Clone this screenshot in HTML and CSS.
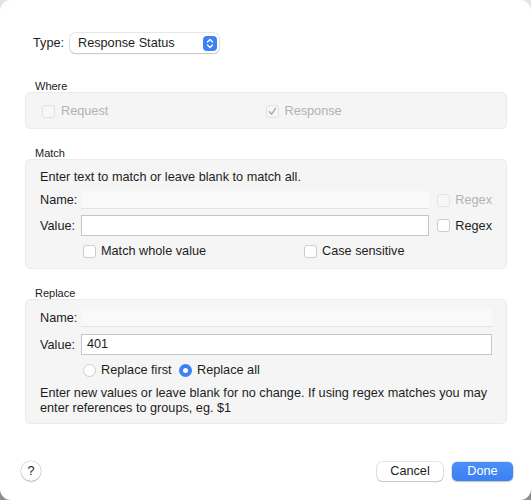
FILE: index.html
```html
<!DOCTYPE html>
<html>
<head>
    <title>Edit Rule</title>
    <link rel="stylesheet" href="styles.css">
</head>
<body>
    <div class="window">
        <div class="type-row">
            <span class="type-label">Type:</span>
            <div class="popup">
                <span>Response Status</span>
                <span class="stepper">
                    <svg width="14" height="15" viewBox="0 0 14 15">
                        <rect width="14" height="15" rx="4" fill="#3a82f6"/>
                        <path d="M4.5 6 L7 3.5 L9.5 6 M4.5 9 L7 11.5 L9.5 9" fill="none" stroke="#fff" stroke-width="1.4" stroke-linecap="round" stroke-linejoin="round"/>
                    </svg>
                </span>
            </div>
        </div>

        <div class="section-title where-title">Where</div>
        <div class="group where">
            <label class="check disabled"><span class="box"></span>Request</label>
            <label class="check disabled">
                <span class="box">
                    <svg width="11" height="11" viewBox="0 0 11 11"><path d="M2.5 5.8 L4.6 8.2 L8.6 2.4" fill="none" stroke="#a8a8a8" stroke-width="1.4" stroke-linecap="round" stroke-linejoin="round"/></svg>
                </span>Response
            </label>
        </div>

        <div class="section-title">Match</div>
        <div class="group match">
            <p class="note">Enter text to match or leave blank to match all.</p>
            <div class="field-row">
                <span class="field-label">Name:</span>
                <div class="field off"></div>
                <label class="check disabled regex"><span class="box"></span>Regex</label>
            </div>
            <div class="field-row">
                <span class="field-label">Value:</span>
                <div class="field input"></div>
                <label class="check regex"><span class="box"></span>Regex</label>
            </div>
            <div class="option-row">
                <label class="check whole"><span class="box"></span>Match whole value</label>
                <label class="check"><span class="box"></span>Case sensitive</label>
            </div>
        </div>

        <div class="section-title">Replace</div>
        <div class="group replace">
            <div class="field-row">
                <span class="field-label">Name:</span>
                <div class="field off"></div>
            </div>
            <div class="field-row">
                <span class="field-label">Value:</span>
                <div class="field input">401</div>
            </div>
            <div class="option-row radios">
                <label class="check first"><span class="radio"></span>Replace first</label>
                <label class="check"><span class="radio on"></span>Replace all</label>
            </div>
            <p class="help">Enter new values or leave blank for no change. If using regex matches you may enter references to groups, eg. $1</p>
        </div>

        <div class="footer">
            <button class="help-btn">?</button>
            <div class="actions">
                <button class="btn">Cancel</button>
                <button class="btn primary">Done</button>
            </div>
        </div>
    </div>
</body>
</html>
```

FILE: styles.css
```css
html, body {
    margin: 0;
    padding: 0;
    height: 100%;
}
body {
    background: linear-gradient(#e4e4e4, #8e8e8e);
    font-family: "Liberation Sans", Arial, sans-serif;
    font-size: 12.7px;
    color: #1d1d1d;
}
.window {
    box-sizing: border-box;
    height: 500px;
    background: #fff;
    border-radius: 11px;
    padding: 33px 24px 0 25px;
}

/* type popup */
.type-row {
    display: flex;
    align-items: center;
    padding-left: 8px;
}
.type-label {
    width: 37px;
}
.popup {
    box-sizing: border-box;
    width: 149px;
    height: 20px;
    display: flex;
    align-items: center;
    justify-content: space-between;
    padding: 0 2px 0 8px;
    border-radius: 5px;
    background: #fff;
    box-shadow: 0 0 0 0.5px rgba(0,0,0,0.18), 0 1px 1.5px rgba(0,0,0,0.15);
}
.stepper {
    display: flex;
}

/* sections */
.section-title {
    font-size: 11px;
    line-height: 12px;
    margin: 18px 0 0 10px;
    color: #222;
}
.where-title {
    margin-top: 27px;
}
.group {
    background: #f5f5f5;
    border: 1px solid #ebebeb;
    border-radius: 5px;
    padding: 0 14px;
}
.where {
    display: grid;
    grid-template-columns: 1fr 1fr;
    padding: 10px 17px 9px 16px;
}
.match {
    padding-top: 9px;
    padding-bottom: 9px;
}
.replace {
    padding-top: 9px;
    padding-bottom: 8px;
}
.note {
    margin: 0;
    line-height: 16px;
}
.help {
    margin: 8px 0 0;
    line-height: 14.5px;
}

/* checkboxes and radios */
.check {
    display: flex;
    align-items: center;
    gap: 5px;
    line-height: 16px;
    white-space: nowrap;
}
.where .check {
    gap: 6px;
}
.box {
    box-sizing: border-box;
    width: 13px;
    height: 13px;
    border-radius: 3px;
    background: #fff;
    border: 1px solid #cdcdcd;
    display: flex;
    align-items: center;
    justify-content: center;
}
.check.disabled {
    color: #b2b2b2;
}
.check.disabled .box {
    background: #f7f7f7;
    border-color: #e2e2e2;
}
.radio {
    box-sizing: border-box;
    width: 13px;
    height: 13px;
    border-radius: 50%;
    background: #fff;
    border: 1px solid #cdcdcd;
}
.radio.on {
    border: 4px solid #3a82f6;
    background: #fff;
}

/* label / field rows */
.field-row {
    display: flex;
    align-items: center;
    margin-top: 6px;
}
.replace .field-row:first-child {
    margin-top: 0;
}
.replace .field-row + .field-row {
    margin-top: 7px;
}
.field-label {
    width: 35px;
    text-align: right;
    margin-right: 6px;
}
.field {
    box-sizing: border-box;
    flex: 1;
}
.field.off {
    height: 18px;
    background: #f9f9f9;
    border-bottom: 1px solid #e4e4e4;
}
.field.input {
    height: 21px;
    background: #fff;
    border: 1px solid #c6c6c6;
    padding: 0 5px;
    line-height: 19px;
}
.regex {
    margin-left: 8px;
}
.option-row {
    display: flex;
    margin: 7px 0 0 43px;
}
.whole {
    width: 221px;
}
.radios .first {
    width: 96px;
}

/* footer */
.footer {
    display: flex;
    justify-content: space-between;
    align-items: center;
    margin-top: 37px;
}
.help-btn {
    width: 20px;
    height: 20px;
    border-radius: 50%;
    border: none;
    padding: 0;
    margin-left: -4px;
    background: #fff;
    box-shadow: 0 0 0 0.5px rgba(0,0,0,0.2), 0 1px 1.5px rgba(0,0,0,0.18);
    font-family: "Liberation Sans", Arial, sans-serif;
    font-size: 12.7px;
    color: #222;
}
.actions {
    display: flex;
    gap: 9px;
    margin-right: -6px;
}
.btn {
    height: 19px;
    border: none;
    border-radius: 5px;
    padding: 0;
    background: #fff;
    box-shadow: 0 0 0 0.5px rgba(0,0,0,0.2), 0 1px 1.5px rgba(0,0,0,0.15);
    font-family: "Liberation Sans", Arial, sans-serif;
    font-size: 12.7px;
    color: #1d1d1d;
    width: 66px;
}
.btn.primary {
    width: 61px;
    color: #fff;
    background: linear-gradient(#4d8ff8, #3a80f5);
}
```
